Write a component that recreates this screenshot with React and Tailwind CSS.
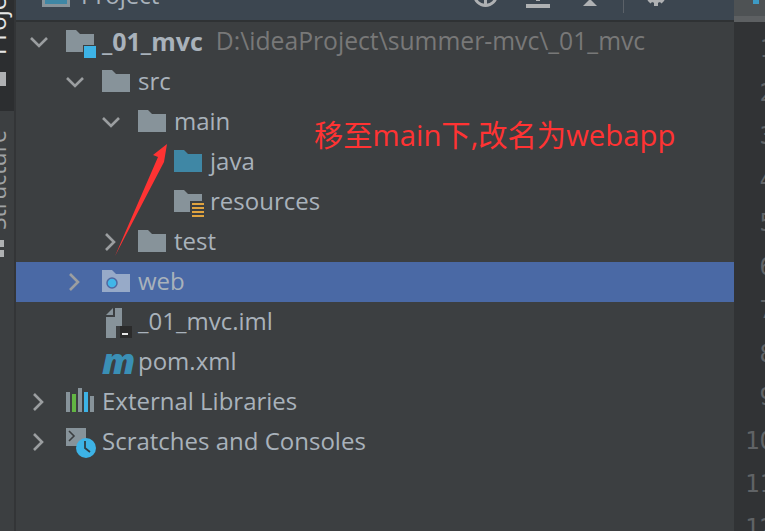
const Chevron = ({ dir }) => (
    <svg width="24" height="24" viewBox="0 0 24 24" fill="none" stroke="#9b9ea0" strokeWidth="2.6">
        {dir === 'down' ? <path d="M4 8l8 8 8-8" /> : <path d="M7 4l8 8-8 8" />}
    </svg>
);

const FolderShape = ({ fill }) => (
    <path d="M0 0H10L14 4H28V22H0Z" fill={fill} />
);

const Folder = ({ fill = '#87939a' }) => (
    <svg width="28" height="22" viewBox="0 0 28 22"><FolderShape fill={fill} /></svg>
);

const ModuleFolder = () => (
    <svg width="32" height="30" viewBox="0 0 32 30" className="overflow-visible">
        <FolderShape fill="#87939a" />
        <rect x="17" y="15" width="14" height="14" fill="#3c3f41" />
        <rect x="18" y="16" width="12" height="12" fill="#3db3e6" />
    </svg>
);

const ResourcesFolder = () => (
    <svg width="32" height="28" viewBox="0 0 32 28" className="overflow-visible">
        <FolderShape fill="#87939a" />
        <rect x="16" y="11" width="16" height="18" fill="#3c3f41" />
        <g fill="#e0a33f">
            <rect x="18" y="13" width="12" height="2" />
            <rect x="18" y="17" width="12" height="2" />
            <rect x="18" y="21" width="12" height="2" />
            <rect x="18" y="25" width="12" height="2" />
        </g>
    </svg>
);

const WebFolder = () => (
    <svg width="28" height="22" viewBox="0 0 28 22">
        <FolderShape fill="#97aac8" />
        <circle cx="10" cy="13" r="5" fill="#40b6e8" stroke="#4f68a0" strokeWidth="1.5" />
    </svg>
);

const ImlFile = () => (
    <svg width="30" height="30" viewBox="0 0 30 30" className="-mt-[2px] overflow-visible">
        <path d="M4 7L11 0V7Z" fill="#87939a" />
        <path d="M13 0H20V18H14V30H4V9H13Z" fill="#87939a" />
        <rect x="18" y="18" width="12" height="12" fill="#2b2b2b" />
        <rect x="20" y="25" width="6" height="2" fill="#e8e8e8" />
    </svg>
);

const PomIcon = () => (
    <span className="block w-[28px] text-center font-['Open_Sans',sans-serif] text-[36px] leading-[22px] font-extrabold italic text-[#3a8fb5]">m</span>
);

const LibIcon = () => (
    <svg width="28" height="24" viewBox="0 0 28 24" className="-mt-[2px]">
        <rect x="0" y="4" width="4" height="20" fill="#87939a" />
        <rect x="6" y="6" width="4" height="18" fill="#62b543" />
        <rect x="12" y="0" width="4" height="24" fill="#87939a" />
        <rect x="18" y="4" width="4" height="20" fill="#3db3e6" />
        <rect x="24" y="8" width="4" height="16" fill="#87939a" />
    </svg>
);

const ScratchIcon = () => (
    <svg width="32" height="30" viewBox="0 0 32 30" className="-mt-[2px] overflow-visible">
        <rect x="0" y="0" width="20" height="18" fill="#87939a" />
        <path d="M3 3l5 5-5 5" fill="none" stroke="#3c3f41" strokeWidth="1.6" />
        <circle cx="20" cy="20" r="10" fill="#3db3e6" />
        <path d="M19 13v7l5 4" fill="none" stroke="#2f3d45" strokeWidth="1.8" />
    </svg>
);

const rows = [
    { depth: 0, dir: 'down', icon: <ModuleFolder />, label: '_01_mvc', bold: true, path: 'D:\\ideaProject\\summer-mvc\\_01_mvc' },
    { depth: 1, dir: 'down', icon: <Folder />, label: 'src' },
    { depth: 2, dir: 'down', icon: <Folder />, label: 'main' },
    { depth: 3, icon: <Folder fill="#3f87a5" />, label: 'java' },
    { depth: 3, icon: <ResourcesFolder />, label: 'resources' },
    { depth: 2, dir: 'right', icon: <Folder />, label: 'test' },
    { depth: 1, dir: 'right', icon: <WebFolder />, label: 'web', selected: true },
    { depth: 1, icon: <ImlFile />, label: '_01_mvc.iml' },
    { depth: 1, icon: <PomIcon />, label: 'pom.xml' },
    { depth: 0, dir: 'right', icon: <LibIcon />, label: 'External Libraries' },
    { depth: 0, dir: 'right', icon: <ScratchIcon />, label: 'Scratches and Consoles' },
];

const Row = ({ row }) => (
    <div className={`flex h-10 items-center ${row.selected ? 'bg-[#4a69a5]' : ''}`}>
        <div style={{ width: row.depth * 36 }} className="shrink-0" />
        <div className="flex w-[50px] shrink-0 justify-start pl-[11px]">
            {row.dir && <Chevron dir={row.dir} />}
        </div>
        <div className="mb-[2px] flex h-[22px] w-[28px] shrink-0 items-start">{row.icon}</div>
        <div className={`mb-[2px] ml-[8px] leading-[38px] whitespace-nowrap text-[#a9b2bb] ${row.bold ? 'text-[25px] font-bold' : 'text-[24px]'}`}>{row.label}</div>
        {row.path && <div className="mb-[2px] ml-[13px] text-[24.7px] leading-[38px] whitespace-nowrap text-[#787878]">{row.path}</div>}
    </div>
);

const lineNumbers = ['1', '2', '3', '4', '5', '6', '7', '8', '9', '10', '11', '12'];

export default function App() {
    return (
        <div className="relative flex h-[531px] w-[765px] overflow-hidden bg-[#3c3f41] font-['Open_Sans',sans-serif]">
            {/* left tool strip */}
            <div className="flex w-[16px] shrink-0 border-r-2 border-[#333537]">
                <div className="w-[14px] overflow-hidden">
                    <div className="flex h-[111px] flex-col items-start justify-start overflow-hidden bg-[#2c2e30]">
                        <div className="-mt-[30px] h-[85px] shrink-0 -translate-x-[18px] rotate-180 text-[24px] leading-[30px] whitespace-nowrap text-[#e6e6e6] [writing-mode:vertical-rl]">Project</div>
                        <div className="mt-[17px] h-[14px] w-[6px] shrink-0 bg-[#afb1b3]" />
                    </div>
                    <div className="mt-[19px] h-[100px] -translate-x-[18px] rotate-180 text-[23px] leading-[30px] whitespace-nowrap text-[#a0a3a5] [writing-mode:vertical-rl]">Structure</div>
                    <div className="mt-[10px] flex w-[4px] flex-col gap-[3px]">
                        <div className="h-[7px] bg-[#afb1b3]" />
                        <div className="h-[7px] bg-[#afb1b3]" />
                    </div>
                </div>
            </div>

            {/* project panel */}
            <div className="flex w-[718px] shrink-0 flex-col">
                <div className="flex h-[22px] shrink-0 items-end overflow-hidden border-b-2 border-[#2f3234] bg-[#3c4650]">
                    <div className="mb-[13px] ml-[26px] h-[20px] w-[28px] shrink-0 border-[3px] border-[#87939a] bg-[#3f87a5]" />
                    <div className="mb-[10px] ml-[11px] text-[24px] leading-[30px] text-[#a9b2bb]">Project</div>
                    <div className="mr-[67px] ml-auto flex items-end">
                        <svg width="25" height="25" viewBox="0 0 25 25" className="mb-[13px] shrink-0" fill="none" stroke="#afb1b3" strokeWidth="3">
                            <circle cx="12.5" cy="12.5" r="11" />
                            <path d="M12.5 1V24M1 12.5H24" />
                        </svg>
                        <svg width="24" height="8" viewBox="0 0 24 8" className="mb-[12px] ml-[28px] shrink-0" fill="#afb1b3">
                            <rect x="0" y="4" width="24" height="4" />
                            <rect x="10" y="0" width="4" height="1" />
                        </svg>
                        <svg width="14" height="7" viewBox="0 0 14 7" className="mb-[14px] ml-[33px] shrink-0" fill="#afb1b3">
                            <path d="M7 0L14 7H0Z" />
                        </svg>
                        <div className="mb-[7px] ml-[26px] h-[13px] w-[1px] shrink-0 bg-[#5b6168]" />
                        <svg width="22" height="22" viewBox="0 0 22 22" className="mb-[14px] ml-[21px] shrink-0" fill="#afb1b3">
                            <circle cx="11" cy="11" r="8" />
                            <path d="M9 0H13V22H9ZM0 9H22V13H0Z" />
                            <path d="M2.5 5.5L5.5 2.5L19.5 16.5L16.5 19.5ZM16.5 2.5L19.5 5.5L5.5 19.5L2.5 16.5Z" />
                        </svg>
                    </div>
                </div>
                <div className="flex flex-col">
                    {rows.map((row) => <Row key={row.label} row={row} />)}
                </div>
            </div>

            {/* editor gutter */}
            <div className="flex min-w-0 flex-1 flex-col bg-[#313335]">
                <div className="relative h-[16px] shrink-0 bg-[#4e5254]">
                    <div className="absolute top-0 left-[19px] h-[4px] w-[6px] bg-[#3d9ac4]" />
                </div>
                <div className="h-[6px] shrink-0 bg-[#5d6062]" />
                <div className="flex flex-col pt-[6px] pl-[11px] font-['DejaVu_Sans_Mono',monospace] text-[24px] text-[#606366]">
                    {lineNumbers.map((n) => (
                        <div key={n} className="h-[43.5px] w-[29px] shrink-0 text-right leading-[43.5px]">{n}</div>
                    ))}
                </div>
            </div>

            {/* red annotation drawn over the tree */}
            <svg width="765" height="531" className="pointer-events-none absolute inset-0">
                <polygon points="167,144 153,155 158,157 115,256 164,162" fill="#ff3333" />
            </svg>
            <div className="absolute top-[116px] left-[314px] font-['Open_Sans','Noto_Sans_CJK_SC',sans-serif] text-[29.3px] leading-[38px] whitespace-nowrap text-[#ff3333]">移至main下,改名为webapp</div>
        </div>
    );
}
